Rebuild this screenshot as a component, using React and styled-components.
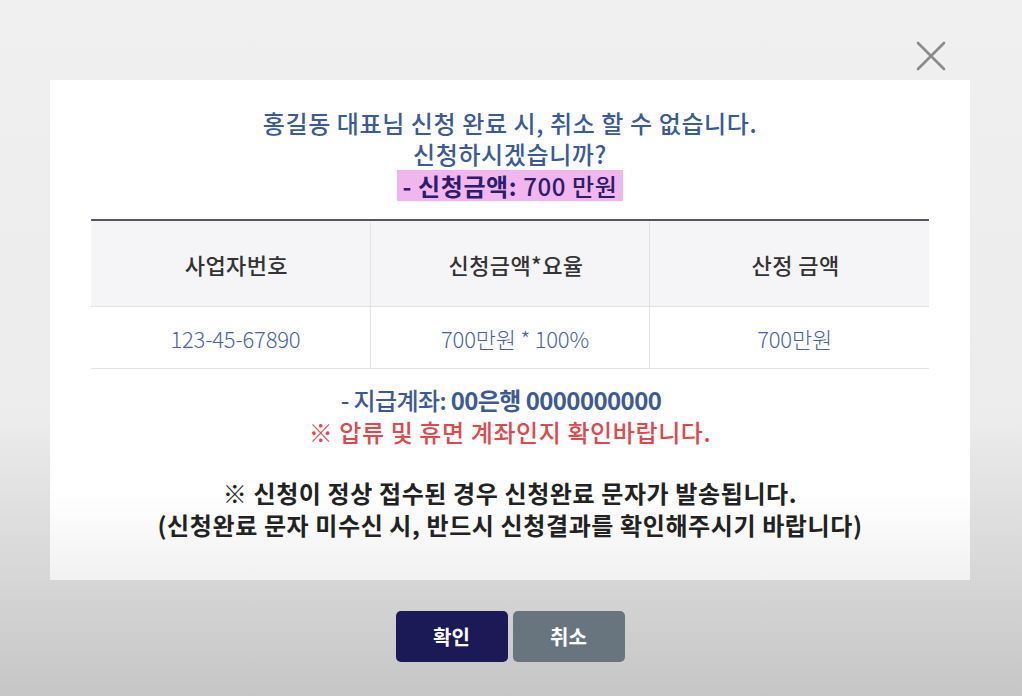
import React from 'react'
import styled, { createGlobalStyle } from 'styled-components'

const Global = createGlobalStyle`
  html, body { margin: 0; padding: 0; }
  body {
    font-family: "Noto Sans CJK KR", "Noto Sans", sans-serif;
    background: #c8c8c8;
  }
`

const rows = [
  { id: '123-45-67890', calc: '700만원 * 100%', amount: '700만원' },
]

const App = () => {
  return (
    <Page>
      <Global />
      <Dialog>
        <TopBar>
          <CloseButton aria-label="닫기">
            <svg width="30" height="30" viewBox="0 0 30 30">
              <path d="M2 2 L28 28 M28 2 L2 28" stroke="#8a8a8a" strokeWidth="2.6" strokeLinecap="round" />
            </svg>
          </CloseButton>
        </TopBar>
        <Card>
          <Title>
            홍길동 대표님 신청 완료 시, 취소 할 수 없습니다.<br />
            신청하시겠습니까?<br />
            <Mark>- 신청금액: <span>700 만원</span></Mark>
          </Title>
          <Table>
            <thead>
              <tr>
                <Th>사업자번호</Th>
                <Th>신청금액*요율</Th>
                <Th>산정 금액</Th>
              </tr>
            </thead>
            <tbody>
              {rows.map((r) => (
                <tr key={r.id}>
                  <Td>{r.id}</Td>
                  <Td>{r.calc}</Td>
                  <Td>{r.amount}</Td>
                </tr>
              ))}
            </tbody>
          </Table>
          <Notice>
            <Line color="#3d5a96" tight>- 지급계좌: <b>00은행 0000000000</b></Line>
            <Line color="#e0484c">※ 압류 및 휴면 계좌인지 확인바랍니다.</Line>
          </Notice>
          <Notice bold>
            <Line color="#222">※ 신청이 정상 접수된 경우 신청완료 문자가 발송됩니다.</Line>
            <Line color="#222">(신청완료 문자 미수신 시, 반드시 신청결과를 확인해주시기 바랍니다)</Line>
          </Notice>
        </Card>
        <Buttons>
          <Button bg="#1b1a56">확인</Button>
          <Button bg="#69757e">취소</Button>
        </Buttons>
      </Dialog>
    </Page>
  )
}

export default App

const Page = styled.div`
  width: 1022px;
  height: 696px;
  background: linear-gradient(180deg, #f0f0f0 0%, #ececec 60%, #c6c6c6 100%);
  display: flex;
  justify-content: center;
  overflow: hidden;
`
const Dialog = styled.div`
  width: 920px;
  margin-left: -2px;
  display: flex;
  flex-direction: column;
`
const TopBar = styled.div`
  height: 80px;
  display: flex;
  justify-content: flex-end;
  align-items: flex-start;
`
const CloseButton = styled.button`
  margin-top: 41px;
  margin-right: 24px;
  padding: 0;
  border: none;
  background: none;
  width: 30px;
  height: 30px;
  cursor: pointer;
  svg { display: block; }
`
const Card = styled.div`
  height: 500px;
  box-sizing: border-box;
  background: linear-gradient(180deg, #ffffff 0%, #ffffff 82%, #f1f1f1 100%);
  padding: 27px 41px 0 41px;
  display: flex;
  flex-direction: column;
  align-items: stretch;
`
const Title = styled.div`
  text-align: center;
  color: #3b5a98;
  font-size: 24px;
  font-weight: 500;
  line-height: 31px;
  letter-spacing: 0.6px;
`
const Mark = styled.span`
  display: inline-block;
  vertical-align: top;
  height: 31px;
  margin-top: 1px;
  background: #f2b6ee;
  color: #2c1c6c;
  padding: 0 6px;
  line-height: 31px;
  font-weight: 700;
  span { font-weight: 500; }
`
const Table = styled.table`
  margin-top: 18px;
  width: 100%;
  border-collapse: collapse;
  border-top: 2px solid #55555f;
  table-layout: fixed;
`
const Th = styled.th`
  height: 85px;
  padding: 0 0 0 12px;
  background: #f5f5f7;
  color: #333;
  font-size: 22px;
  font-weight: 500;
  letter-spacing: 0.4px;
  border-bottom: 1px solid #e2e2e2;
  border-left: 1px solid #e2e2e2;
  &:first-child { border-left: none; }
`
const Td = styled.td`
  height: 61px;
  padding: 0 0 0 10px;
  text-align: center;
  color: #4a63a0;
  font-size: 22px;
  font-weight: 300;
  letter-spacing: -0.2px;
  border-bottom: 1px solid #e2e2e2;
  border-left: 1px solid #e2e2e2;
  &:first-child { border-left: none; }
`
const Notice = styled.div`
  margin-top: ${(p) => (p.bold ? '29px' : '15px')};
  text-align: center;
  font-size: 24px;
  line-height: 32px;
  font-weight: ${(p) => (p.bold ? 700 : 500)};
  letter-spacing: 0.6px;
`
const Line = styled.div`
  color: ${(p) => p.color};
  letter-spacing: ${(p) => (p.tight ? '-0.6px' : 'inherit')};
  padding-right: ${(p) => (p.tight ? '18px' : '0')};
  b { font-weight: 700; }
`
const Buttons = styled.div`
  margin-top: 31px;
  display: flex;
  justify-content: center;
  gap: 5px;
`
const Button = styled.button`
  width: 112px;
  height: 51px;
  border: none;
  border-radius: 5px;
  background: ${(p) => p.bg};
  color: #fff;
  font-family: inherit;
  font-size: 20px;
  font-weight: 700;
  cursor: pointer;
`
